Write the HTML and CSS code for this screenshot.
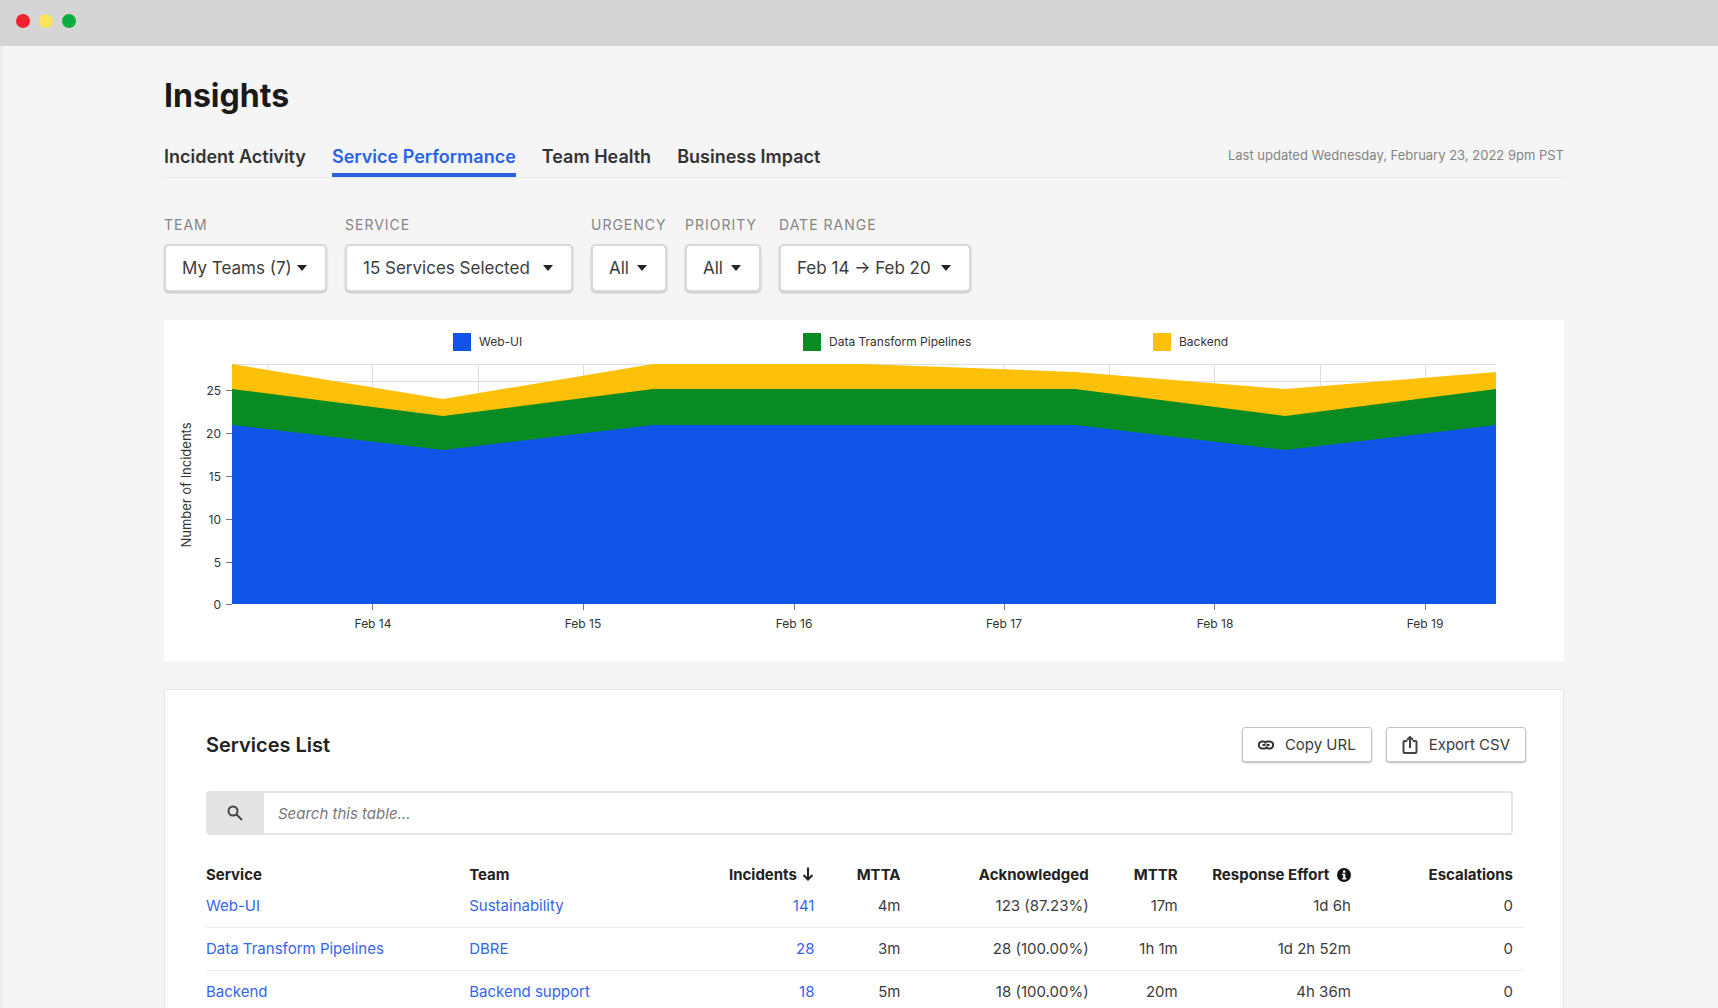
FILE: index.html
```html
<!DOCTYPE html>
<html lang="en">
<head>
<meta charset="utf-8">
<meta name="viewport" content="width=device-width, initial-scale=1">
<title>Insights</title>
<link rel="stylesheet" href="styles.css">
</head>
<body>
<div class="window">
  <div class="titlebar">
    <span class="dot dot-red"></span>
    <span class="dot dot-yellow"></span>
    <span class="dot dot-green"></span>
  </div>
  <main class="page">
    <h1 class="page-title">Insights</h1>
    <div class="tabbar">
      <nav class="tabs">
        <a class="tab" href="#activity">Incident Activity</a>
        <a class="tab tab-active" href="#performance" aria-current="page">Service Performance</a>
        <a class="tab" href="#health">Team Health</a>
        <a class="tab" href="#impact">Business Impact</a>
      </nav>
      <p class="updated">Last updated Wednesday, February 23, 2022 9pm PST</p>
    </div>

    <form class="filters">
      <div class="filter filter-team">
        <label class="filter-label" for="team">TEAM</label>
        <div class="select"><select id="team"><option>My Teams (7)</option></select><svg class="caret" viewBox="0 0 10 6"><path d="M0 0h10L5 6z"/></svg></div>
      </div>
      <div class="filter filter-service">
        <label class="filter-label" for="service">SERVICE</label>
        <div class="select"><select id="service"><option>15 Services Selected</option></select><svg class="caret" viewBox="0 0 10 6"><path d="M0 0h10L5 6z"/></svg></div>
      </div>
      <div class="filter filter-level">
        <label class="filter-label" for="urgency">URGENCY</label>
        <div class="select"><select id="urgency"><option>All</option></select><svg class="caret" viewBox="0 0 10 6"><path d="M0 0h10L5 6z"/></svg></div>
      </div>
      <div class="filter filter-level">
        <label class="filter-label" for="priority">PRIORITY</label>
        <div class="select"><select id="priority"><option>All</option></select><svg class="caret" viewBox="0 0 10 6"><path d="M0 0h10L5 6z"/></svg></div>
      </div>
      <div class="filter filter-range">
        <label class="filter-label" for="range">DATE RANGE</label>
        <div class="select"><select id="range"><option>Feb 14 → Feb 20</option></select><svg class="caret" viewBox="0 0 10 6"><path d="M0 0h10L5 6z"/></svg></div>
      </div>
    </form>

    <section class="chart-card">
      <ul class="legend">
        <li><span class="swatch swatch-web"></span>Web-UI</li>
        <li><span class="swatch swatch-data"></span>Data Transform Pipelines</li>
        <li><span class="swatch swatch-backend"></span>Backend</li>
      </ul>
      <svg class="chart" viewBox="0 0 1400 311" role="img" aria-label="Number of incidents by day and service">
        <g class="grid">
          <path d="M68 14.5H1332M68 31.5H1332"/>
          <path d="M104.500 14V60M208.500 14V60M314.500 14V60M419.500 14V60M840.500 14V60M945.500 14V60M1050.500 14V60M1156.500 14V60M1261.500 14V60"/>
        </g>
        <path class="area-backend" d="M68 14L279 49L489 14H700L911 22L1121 39L1332 22V254H68Z"/>
        <path class="area-data" d="M68 39L279 66L489 39H911L1121 66L1332 39V254H68Z"/>
        <path class="area-web" d="M68 75L279 100L489 75H911L1121 100L1332 75V254H68Z"/>
        <path class="ticks" d="M62 40.500h6M62 83.500h6M62 126.500h6M62 169.500h6M62 212.500h6M62 254.500h6M208.500 254v6M419.500 254v6M630.500 254v6M840.500 254v6M1050.500 254v6M1261.500 254v6"/>
        <g class="y-labels">
          <text x="57" y="45">25</text>
          <text x="57" y="88">20</text>
          <text x="57" y="131">15</text>
          <text x="57" y="174">10</text>
          <text x="57" y="217">5</text>
          <text x="57" y="259">0</text>
        </g>
        <g class="x-labels">
          <text x="209" y="278">Feb 14</text>
          <text x="419" y="278">Feb 15</text>
          <text x="630" y="278">Feb 16</text>
          <text x="840" y="278">Feb 17</text>
          <text x="1051" y="278">Feb 18</text>
          <text x="1261" y="278">Feb 19</text>
        </g>
        <text class="axis-title" transform="translate(27 135) rotate(-90)">Number of Incidents</text>
      </svg>
    </section>

    <section class="services">
      <div class="services-head">
        <h2 class="services-title">Services List</h2>
        <div class="actions">
          <button class="action" type="button">
            <svg class="icon-link" viewBox="0 0 16 10"><path d="M8 3.200A3 3 0 0 0 5.300 1.500H4.300a3.500 3.500 0 0 0 0 7H6.500A2 2 0 0 0 8.600 6.300M8 6.800A3 3 0 0 0 10.700 8.500H11.700a3.500 3.500 0 0 0 0-7H9.500A2 2 0 0 0 7.400 3.700M4.500 5H7.500M8.500 5H11.500"/></svg>
            Copy URL
          </button>
          <button class="action" type="button">
            <svg class="icon-export" viewBox="0 0 16 18"><path d="M5 5H2.500a1 1 0 0 0-1 1V16a1 1 0 0 0 1 1H13.500a1 1 0 0 0 1-1V6a1 1 0 0 0-1-1H11M8 12V1.500M5 4L8 1L11 4"/></svg>
            Export CSV
          </button>
        </div>
      </div>
      <div class="search">
        <label class="search-icon" for="search" aria-label="Search this table">
          <svg viewBox="0 0 16 16"><circle cx="6" cy="6" r="4.500"/><path d="M9.500 9.500L15 15"/></svg>
        </label>
        <input class="search-input" id="search" type="text" placeholder="Search this table...">
      </div>
      <table class="table">
        <colgroup>
          <col class="col-service"><col class="col-team"><col class="col-incidents"><col class="col-mtta">
          <col class="col-ack"><col class="col-mttr"><col class="col-effort"><col class="col-esc">
        </colgroup>
        <thead>
          <tr>
            <th class="text">Service</th>
            <th class="text">Team</th>
            <th>Incidents <svg class="icon-sort" viewBox="0 0 12 14"><path d="M6 0.500V12M1.500 8L6 12.500L10.500 8"/></svg></th>
            <th>MTTA</th>
            <th>Acknowledged</th>
            <th>MTTR</th>
            <th>Response Effort <svg class="icon-info" viewBox="0 0 14 14"><circle cx="7" cy="7" r="7"/><path d="M6 2.500h2.400v2.200H6zM5.200 5.800h3.200v4.200h1v1.500H5.200v-1.500h1V7.300h-1z"/></svg></th>
            <th>Escalations</th>
          </tr>
        </thead>
        <tbody>
          <tr><td class="text"><a href="#web-ui">Web-UI</a></td><td class="text"><a href="#sustainability">Sustainability</a></td><td><a href="#i1">141</a></td><td>4m</td><td>123 (87.23%)</td><td>17m</td><td>1d 6h</td><td>0</td></tr>
          <tr><td class="text"><a href="#pipelines">Data Transform Pipelines</a></td><td class="text"><a href="#dbre">DBRE</a></td><td><a href="#i2">28</a></td><td>3m</td><td>28 (100.00%)</td><td>1h 1m</td><td>1d 2h 52m</td><td>0</td></tr>
          <tr><td class="text"><a href="#backend">Backend</a></td><td class="text"><a href="#support">Backend support</a></td><td><a href="#i3">18</a></td><td>5m</td><td>18 (100.00%)</td><td>20m</td><td>4h 36m</td><td>0</td></tr>
        </tbody>
      </table>
    </section>
  </main>
</div>
</body>
</html>
```
FILE: styles.css
```css
* { box-sizing: border-box; }

body {
  margin: 0;
  background: #f5f5f5;
  color: #3c3c3c;
  font-family: Inter, "Liberation Sans", sans-serif;
  font-size: 15px;
  line-height: 20px;
}

h1, h2, p, ul { margin: 0; padding: 0; }

/* window frame */
.window {
  display: flex;
  flex-direction: column;
  height: 100vh;
  overflow: hidden;
}

.titlebar {
  flex: none;
  display: flex;
  align-items: center;
  gap: 9px;
  height: 46px;
  padding: 0 16px 5px;
  background: #d5d5d5;
}

.dot { width: 14px; height: 14px; border-radius: 50%; }
.dot-red { background: #f3202d; }
.dot-yellow { background: #fbe45c; }
.dot-green { background: #0aae3f; }

.page {
  flex: 1;
  display: flex;
  flex-direction: column;
  padding: 30px 154px 0 162px;
  border-left: 2px solid #ececec;
}

.page-title {
  color: #1a1a1a;
  font-size: 32px;
  font-weight: 700;
  line-height: 40px;
}

/* tabs */
.tabbar {
  display: flex;
  justify-content: space-between;
  margin-top: 29px;
  box-shadow: inset 0 -1px #e6e8e8;
  padding-bottom: 1px;
}

.tabs { display: flex; gap: 26px; }

.tab {
  padding-bottom: 4px;
  border-bottom: 4px solid transparent;
  color: #333;
  font-size: 18px;
  font-weight: 600;
  line-height: 24px;
  text-decoration: none;
}

.tab-active { color: #2a62e8; border-bottom-color: #2a5fe0; }

.updated { color: #858585; font-size: 13px; }

/* filters */
.filters { display: flex; gap: 18px; margin-top: 37px; }
.filter { display: flex; flex-direction: column; gap: 9px; }
.filter-team { width: 163px; }
.filter-service { width: 228px; }
.filter-level { width: 76px; }
.filter-range { width: 192px; }

.filter-label {
  color: #858585;
  font-size: 14px;
  letter-spacing: 1px;
}

.select { display: grid; align-items: center; }

.select select {
  grid-area: 1 / 1;
  appearance: none;
  height: 48px;
  margin: 0;
  padding: 0 30px 0 16px;
  border: 2px solid #d9d9d9;
  border-radius: 5px;
  background: #fff;
  box-shadow: 0 1px 2px #bbb;
  color: #3c3c3c;
  font-family: inherit;
  font-size: 17px;
}

.caret {
  grid-area: 1 / 1;
  justify-self: end;
  width: 10px;
  height: 6px;
  margin-right: 20px;
  fill: #222;
  pointer-events: none;
}

/* stacked area chart */
.chart-card {
  margin-top: 28px;
  background: #fff;
}

.legend {
  display: flex;
  height: 30px;
  padding: 14px 0 0 289px;
  list-style: none;
  color: #333;
  font-size: 12px;
}

.legend li {
  display: flex;
  flex: 0 0 350px;
  align-items: center;
  gap: 8px;
}

.swatch { width: 18px; height: 18px; }
.swatch-web { background: #1155e8; }
.swatch-data { background: #078b22; }
.swatch-backend { background: #ffc00a; }

.chart { display: block; width: 100%; height: auto; fill: #333; font-size: 12px; }
.grid { fill: none; stroke: #dedede; }
.ticks { fill: none; stroke: #777; }
.area-backend { fill: #ffc00a; }
.area-data { fill: #078b22; }
.area-web { fill: #1155e8; }
.y-labels { text-anchor: end; }
.x-labels, .axis-title { text-anchor: middle; }
.axis-title { font-size: 13px; }

/* services list */
.services {
  flex: 1 0 auto;
  margin-top: 28px;
  padding: 37px 37px 38px 41px;
  border: 1px solid #e6e6e6;
  background: #fff;
}

.services-head {
  display: flex;
  align-items: center;
  justify-content: space-between;
}

.services-title { color: #222; font-size: 20px; font-weight: 600; line-height: 24px; }

.actions { display: flex; gap: 14px; }

.action {
  display: flex;
  align-items: center;
  gap: 11px;
  height: 35px;
  padding: 0 15px;
  border: 1px solid #c4c4c4;
  border-radius: 3px;
  background: #fff;
  box-shadow: 0 1px 2px #bbb;
  color: #3c3c3c;
  font-family: inherit;
  font-size: 15px;
}

.icon-link { width: 16px; height: 10px; fill: none; stroke: #333; stroke-width: 2; }
.icon-export { width: 16px; height: 18px; fill: none; stroke: #444; stroke-width: 2; }

.search {
  display: flex;
  height: 44px;
  margin: 29px 13px 0 0;
  border: 2px solid #e2e4e4;
  border-radius: 4px;
}

.search-icon {
  display: flex;
  flex: none;
  align-items: center;
  justify-content: center;
  width: 56px;
  padding-right: 2px;
  background: #e4e4e4;
}

.search-icon svg { width: 16px; height: 16px; fill: none; stroke: #444; stroke-width: 2; }

.search-input {
  flex: 1;
  padding: 0 14px;
  border: 0;
  background: #fff;
  font-family: inherit;
  font-size: 15px;
}

.search-input::placeholder { color: #777; font-style: italic; opacity: 1; }

.table {
  width: calc(100% - 3px);
  margin-top: 30px;
  border-collapse: separate;
  border-spacing: 0;
  table-layout: fixed;
}

.col-service { width: 263px; }
.col-team { width: 189px; }
.col-incidents { width: 166px; }
.col-mtta { width: 86px; }
.col-ack { width: 188px; }
.col-mttr { width: 89px; }
.col-effort { width: 173px; }
.col-esc { width: 162px; }

.table th {
  padding: 0 10px 0 0;
  color: #222;
  font-weight: 700;
  text-align: right;
  white-space: nowrap;
}

.table td {
  padding: 11px 10px 11px 0;
  border-bottom: 1px solid #ebebeb;
  text-align: right;
  white-space: nowrap;
}

.table .text { text-align: left; }
.table a { color: #3565f0; text-decoration: none; }

.icon-sort { width: 12px; height: 14px; margin-left: 2px; vertical-align: -1px; fill: none; stroke: #222; stroke-width: 2; }
.icon-info { width: 14px; height: 14px; margin-left: 4px; vertical-align: -2px; fill: #111; }
.icon-info path { fill: #fff; }
```
